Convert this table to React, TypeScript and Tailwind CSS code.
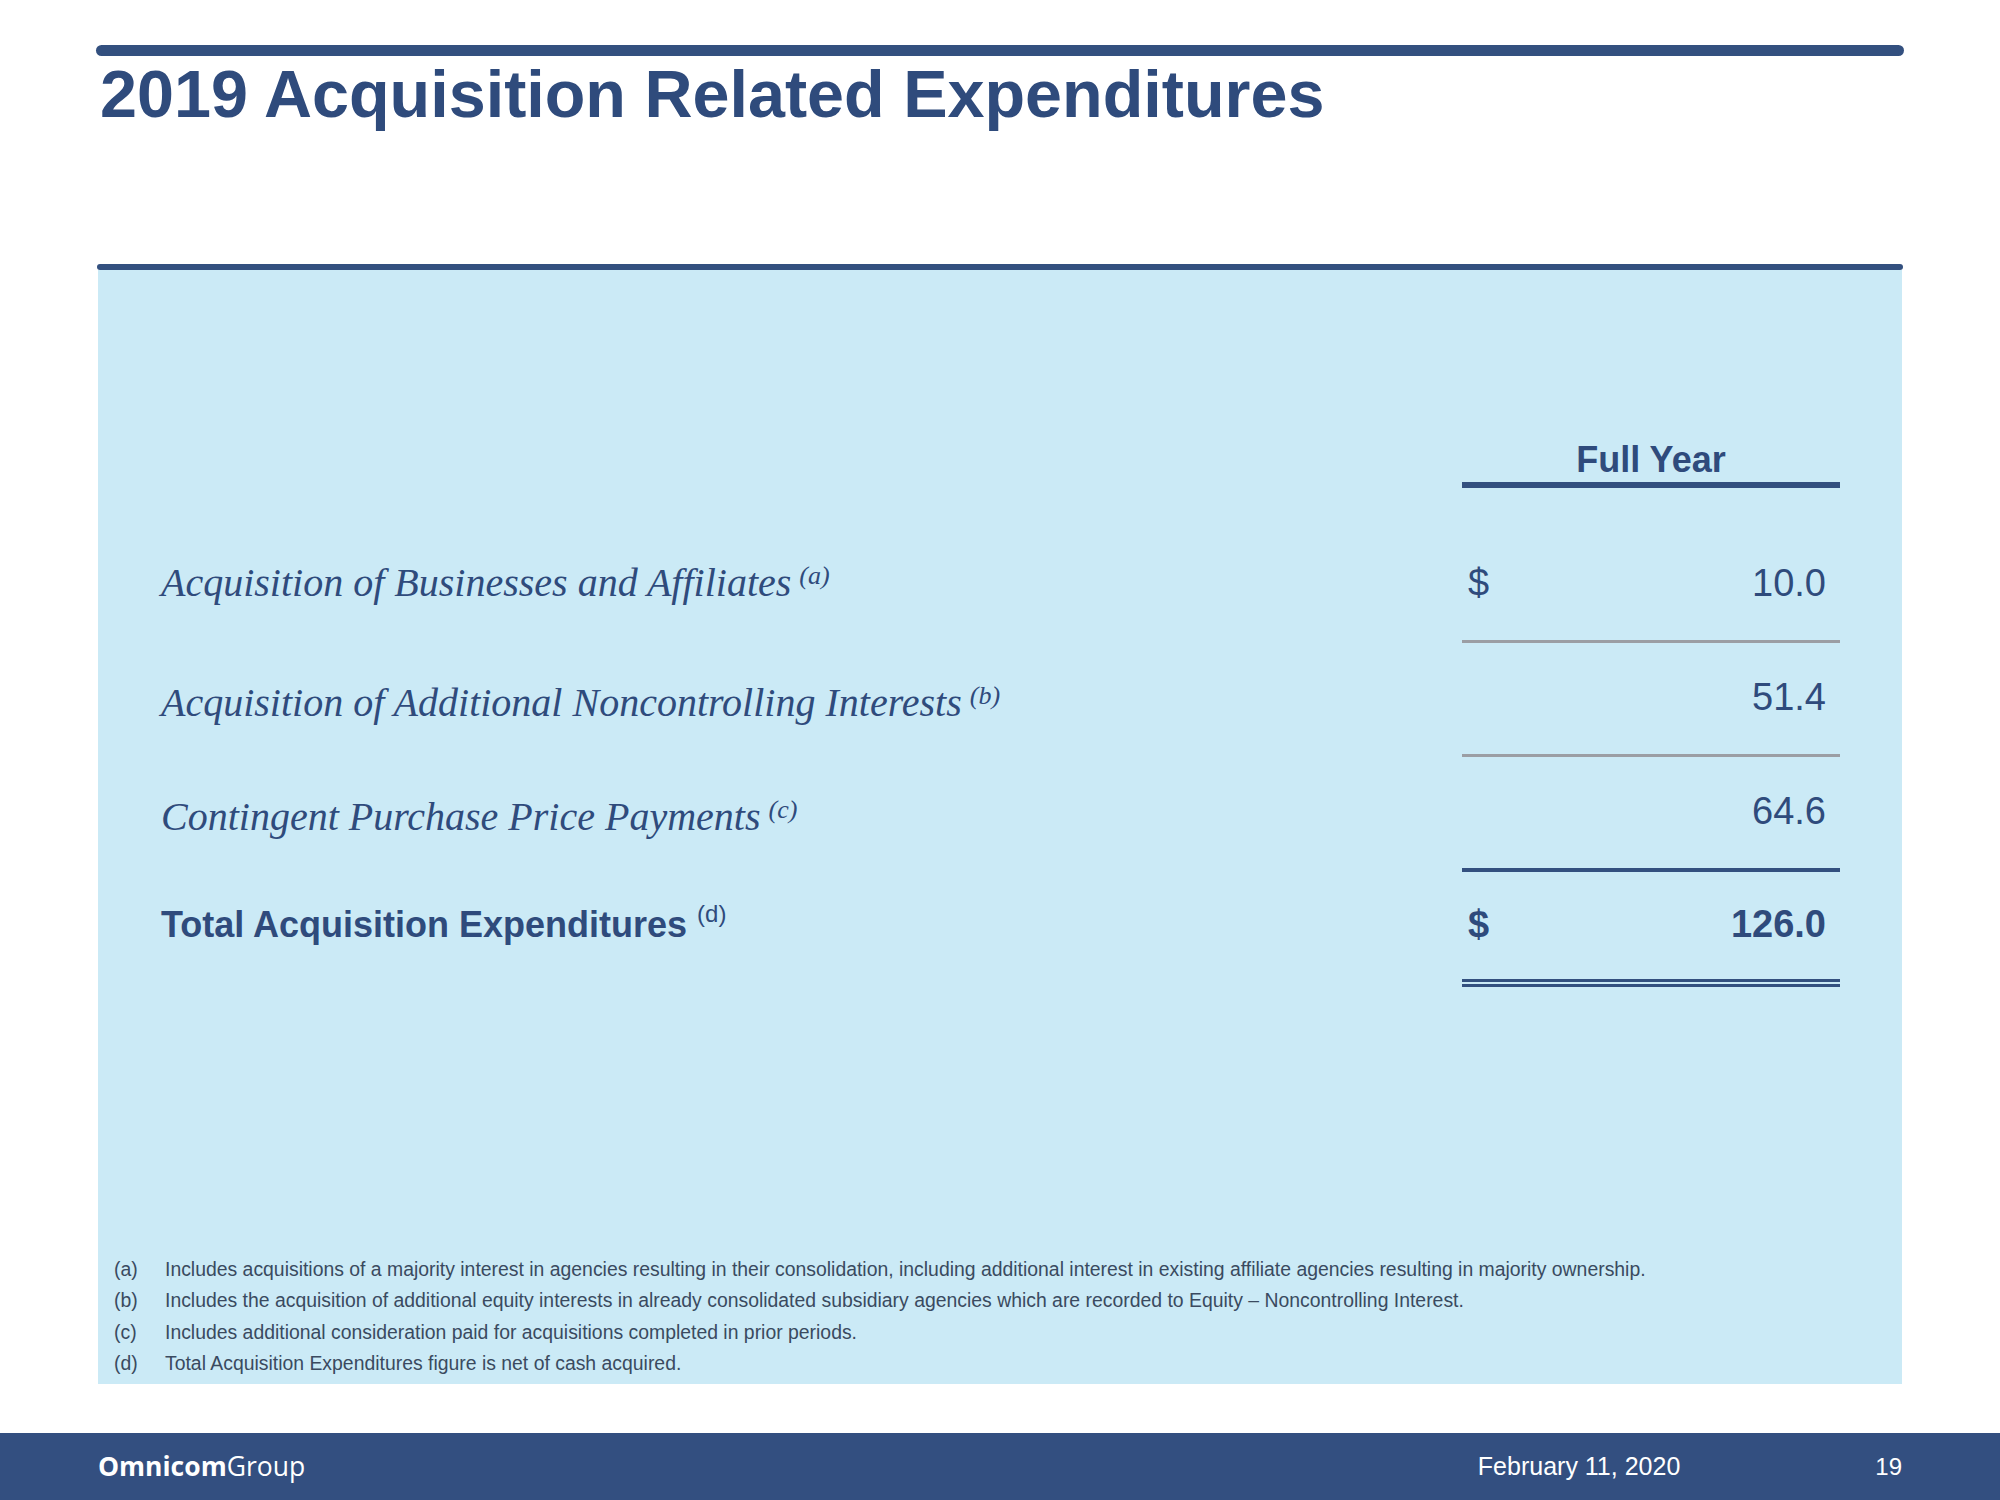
const rows = [
  { label: "Acquisition of Businesses and Affiliates", note: "(a)", sign: "$", value: "10.0", line: "gray" },
  { label: "Acquisition of Additional Noncontrolling Interests", note: "(b)", sign: "", value: "51.4", line: "gray" },
  { label: "Contingent Purchase Price Payments", note: "(c)", sign: "", value: "64.6", line: "blue" },
];

const notes = [
  ["(a)", "Includes acquisitions of a majority interest in agencies resulting in their consolidation, including additional interest in existing affiliate agencies resulting in majority ownership."],
  ["(b)", "Includes the acquisition of additional equity interests in already consolidated subsidiary agencies which are recorded to Equity – Noncontrolling Interest."],
  ["(c)", "Includes additional consideration paid for acquisitions completed in prior periods."],
  ["(d)", "Total Acquisition Expenditures figure is net of cash acquired."],
];

export default function App() {
  return (
    <div className="w-[2000px] h-[1500px] bg-white flex flex-col font-['Liberation_Sans',Arial,sans-serif] text-[#2f4b7c]">
      <div className="mx-[96px] mt-[45px] h-[11px] rounded-full bg-[#33507f]" />
      <h1 className="ml-[100px] mt-[5px] text-[66.5px] leading-none font-bold">
        2019 Acquisition Related Expenditures
      </h1>

      <div className="mx-[97px] mt-[136px] h-[6px] rounded-full bg-[#33507f]" />
      <div className="mx-[98px] h-[1114px] bg-[#cbeaf6] flex flex-col pl-[63px] pr-[62px]">
        <div className="flex justify-end pt-[172px]">
          <div className="w-[378px] text-center text-[36px] leading-none font-bold pb-[4px] border-b-[6px] border-[#33507f]">
            Full Year
          </div>
        </div>

        {rows.map((r, i) => (
          <div key={r.label} className={`flex items-baseline ${i === 0 ? "mt-[41px]" : ""}`}>
            <div className="flex-1 font-['Liberation_Serif','Times_New_Roman',serif] italic text-[40px] text-[#2f4b7c]">
              {r.label}
              <sup className="ml-[8px] text-[26px] align-[-1px]">{r.note}</sup>
            </div>
            <div
              className={`w-[378px] flex justify-between pt-[35px] pb-[38px] pl-[6px] pr-[14px] text-[38px] leading-none ${
                r.line === "gray" ? "border-b-[3px] border-[#9b9ea4]" : "border-b-[4px] border-[#33507f]"
              }`}
            >
              <span>{r.sign}</span>
              <span>{r.value}</span>
            </div>
          </div>
        ))}

        <div className="flex items-baseline">
          <div className="flex-1 text-[36px] font-bold">
            Total Acquisition Expenditures
            <sup className="ml-[10px] text-[24px] font-normal align-[3px]">(d)</sup>
          </div>
          <div className="w-[378px] flex justify-between pt-[33px] pb-[36px] pl-[6px] pr-[14px] text-[38px] leading-none font-bold border-b-[8px] border-double border-[#33507f]">
            <span>$</span>
            <span>126.0</span>
          </div>
        </div>

        <div className="mt-auto pb-[4px] -ml-[47px] text-[19.4px] leading-[31.5px] text-[#3a4a60]">
          {notes.map(([k, t]) => (
            <div key={k} className="flex">
              <span className="w-[51px] shrink-0">{k}</span>
              <span>{t}</span>
            </div>
          ))}
        </div>
      </div>

      <div className="mt-auto h-[67px] bg-[#334f80] flex items-center px-[98px] text-white">
        <div className="font-['Open_Sans',sans-serif] text-[26.5px]">
          <span className="font-bold">Omnicom</span>
          <span className="font-normal">Group</span>
        </div>
        <div className="ml-auto text-[25px]">February 11, 2020</div>
        <div className="ml-[195px] text-[24px]">19</div>
      </div>
    </div>
  );
}
